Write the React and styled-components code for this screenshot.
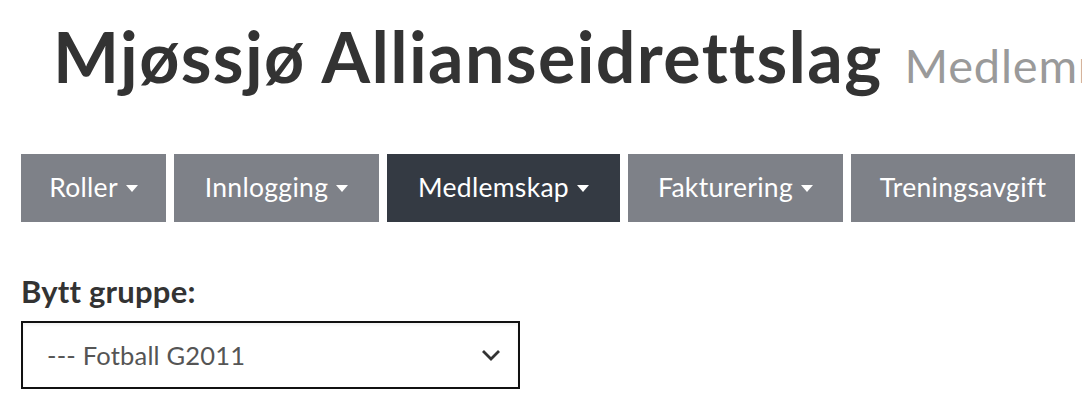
import React from "react";
import styled, { createGlobalStyle } from "styled-components";

const GlobalStyle = createGlobalStyle`
 html, body {
  margin: 0;
  padding: 0;
  background: #fff;
  overflow: hidden;
 }
 body {
  font-family: Lato, "Open Sans", sans-serif;
  color: #333;
 }
`;

const Page = styled.div`
 width: 1082px;
 height: 412px;
 padding: 0 0 0 21px;
 box-sizing: border-box;
 overflow: hidden;
`;

const Heading = styled.h1`
 margin: 0;
 padding: 14px 0 0 32px;
 height: 140px;
 box-sizing: border-box;
 white-space: nowrap;
 font-size: 70px;
 font-weight: 700;
 line-height: 84px;
 color: #333;
 letter-spacing: 1.35px;
`;

const SubTitle = styled.small`
 font-size: 47px;
 font-weight: 400;
 color: #9a9a9a;
 margin-left: 22px;
 letter-spacing: 0.8px;
`;

const Nav = styled.nav`
 display: flex;
 gap: 8px;
 margin-top: 14px;
`;

const NavButton = styled.button`
 flex-shrink: 0;
 display: flex;
 align-items: center;
 justify-content: center;
 gap: 8px;
 height: 68px;
 width: ${p => p.$w}px;
 border: none;
 padding: 0 0 3px;
 font-family: Lato, "Open Sans", sans-serif;
 font-size: 26.5px;
 letter-spacing: 0.3px;
 color: #fff;
 background: ${p => (p.$active ? "#343a43" : "#7e8188")};
`;

// small down-pointing triangle next to dropdown labels
const Caret = styled.span`
 width: 0;
 height: 0;
 border-left: 6.5px solid transparent;
 border-right: 6.5px solid transparent;
 border-top: 7px solid #fff;
 margin-top: 4px;
`;

const Label = styled.label`
 display: block;
 margin-top: 51px;
 font-size: 31px;
 font-weight: 700;
 color: #333;
 line-height: 37px;
 letter-spacing: 0.2px;
`;

const SelectBox = styled.div`
 margin-top: 11px;
 width: 499px;
 height: 68px;
 box-sizing: border-box;
 border: 2px solid #111;
 box-shadow: inset 0 2px 3px rgba(0, 0, 0, 0.06);
 display: flex;
 align-items: center;
 justify-content: space-between;
 padding: 0 17px 0 24px;
 font-size: 25.5px;
 letter-spacing: 0.2px;
 color: #555;
`;

const items = [
 { label: "Roller", caret: true, w: 145 },
 { label: "Innlogging", caret: true, w: 205 },
 { label: "Medlemskap", caret: true, w: 233, active: true },
 { label: "Fakturering", caret: true, w: 215 },
 { label: "Treningsavgift", caret: false, w: 224 },
];

export default function App() {
 return (
  <>
   <GlobalStyle />
   <Page>
    <Heading>
     Mjøssjø Allianseidrettslag<SubTitle>Medlemmer</SubTitle>
    </Heading>
    <Nav>
     {items.map(it => (
      <NavButton key={it.label} $w={it.w} $active={it.active}>
       {it.label}
       {it.caret && <Caret />}
      </NavButton>
     ))}
    </Nav>
    <Label>Bytt gruppe:</Label>
    <SelectBox>
     <span>--- Fotball G2011</span>
     <svg width="20" height="12" viewBox="0 0 20 12">
      <path d="M2 2 L10 10 L18 2" fill="none" stroke="#333" strokeWidth="2.8" />
     </svg>
    </SelectBox>
   </Page>
  </>
 );
}
